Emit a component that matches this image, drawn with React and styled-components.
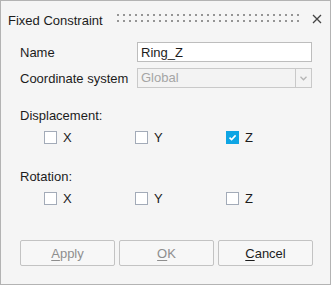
import React, { useState } from "react";
import styled, { createGlobalStyle } from "styled-components";

const GlobalStyle = createGlobalStyle`
    body {
        margin: 0;
        background: #f5f5f5;
        font-family: "Liberation Sans", Arial, sans-serif;
    }
`

const axes = ["X", "Y", "Z"];

const Grip = () => (
    <svg width="183" height="8" viewBox="0 0 183 8">
        <defs>
            <pattern id="grip" width="6" height="6" patternUnits="userSpaceOnUse">
                <rect x="0" y="0" width="2" height="2" fill="#959595" />
            </pattern>
        </defs>
        <rect x="0" y="0" width="183" height="8" fill="url(#grip)" />
    </svg>
)

const CloseIcon = () => (
    <svg width="10" height="10" viewBox="0 0 10 10">
        <path d="M1 1 L9 9 M9 1 L1 9" stroke="#444" strokeWidth="1.3" fill="none" />
    </svg>
)

const CheckItem = ({ label, checked, onToggle }) => (
    <StCheckLabel onClick={onToggle}>
        <StBox $checked={checked}>
            {checked && (
                <svg width="9" height="9" viewBox="0 0 9 9">
                    <path d="M1.5 4.6 L3.6 6.6 L7.6 2.4" stroke="#fff" strokeWidth="1.6" fill="none" />
                </svg>
            )}
        </StBox>
        {label}
    </StCheckLabel>
)

const App = () => {
    const [name, setName] = useState("Ring_Z");
    const [disp, setDisp] = useState({ X: false, Y: false, Z: true });
    const [rot, setRot] = useState({ X: false, Y: false, Z: false });

    return (
        <>
            <GlobalStyle />
            <StWindow>
                <StTitleBar>
                    <StTitle>Fixed Constraint</StTitle>
                    <StGripWrap>
                        <Grip />
                    </StGripWrap>
                    <StClose>
                        <CloseIcon />
                    </StClose>
                </StTitleBar>
                <StBody>
                    <StFields>
                        <StLabel>Name</StLabel>
                        <StInput value={name} onChange={(e) => setName(e.target.value)} />
                        <StLabel>Coordinate system</StLabel>
                        <StSelect>
                            <StSelectValue>Global</StSelectValue>
                            <StSelectButton>
                                <svg width="7" height="5" viewBox="0 0 7 5">
                                    <path d="M0.5 0.8 L3.5 3.8 L6.5 0.8" stroke="#b5b5b5" strokeWidth="1.3" fill="none" />
                                </svg>
                            </StSelectButton>
                        </StSelect>
                    </StFields>

                    <StSection $top={20}>Displacement:</StSection>
                    <StCheckRow>
                        {axes.map((a) => (
                            <CheckItem key={a} label={a} checked={disp[a]}
                                onToggle={() => setDisp({ ...disp, [a]: !disp[a] })} />
                        ))}
                    </StCheckRow>

                    <StSection $top={25}>Rotation:</StSection>
                    <StCheckRow>
                        {axes.map((a) => (
                            <CheckItem key={a} label={a} checked={rot[a]}
                                onToggle={() => setRot({ ...rot, [a]: !rot[a] })} />
                        ))}
                    </StCheckRow>

                    <StButtons>
                        <StButton disabled><u>A</u>pply</StButton>
                        <StButton disabled><u>O</u>K</StButton>
                        <StButton><u>C</u>ancel</StButton>
                    </StButtons>
                </StBody>
            </StWindow>
        </>
    )
}

export default App;

const StWindow = styled.div`
    width: 331px;
    height: 285px;
    box-sizing: border-box;
    border: 1px solid #b3b3b3;
    background: #f5f5f5;
    display: flex;
    flex-direction: column;
    color: #1c1c1c;
    font-size: 13px;
    line-height: 15px;
`
const StTitleBar = styled.div`
    height: 41px;
    flex-shrink: 0;
    display: flex;
    align-items: flex-start;
    padding: 12px 0 0 7px;
    box-sizing: border-box;
`
const StTitle = styled.div`
    width: 109px;
    white-space: nowrap;
`
const StGripWrap = styled.div`
    padding-top: 1px;
    height: 8px;
    display: flex;
`
const StClose = styled.div`
    margin-left: 12px;
    padding-top: 1px;
    display: flex;
`
const StBody = styled.div`
    flex: 1;
    display: flex;
    flex-direction: column;
    padding: 0 18px 18px 19px;
`
const StFields = styled.div`
    display: grid;
    grid-template-columns: 117px 1fr;
    grid-auto-rows: 20px;
    row-gap: 6px;
    align-items: center;
`
const StLabel = styled.div`
    white-space: nowrap;
`
const StInput = styled.input`
    box-sizing: border-box;
    height: 20px;
    width: 100%;
    margin: 0;
    border: 1px solid #bdbdbd;
    background: #fff;
    padding: 0 3px;
    font: inherit;
    color: #1c1c1c;
    outline: none;
`
const StSelect = styled.div`
    display: flex;
    height: 20px;
`
const StSelectValue = styled.div`
    flex: 1;
    box-sizing: border-box;
    border: 1px solid #c9c9c9;
    background: #f3f3f3;
    color: #a5a5a5;
    padding: 1px 3px 0;
`
const StSelectButton = styled.div`
    width: 16px;
    box-sizing: border-box;
    border: 1px solid #c9c9c9;
    border-left: none;
    background: #f3f3f3;
    display: flex;
    align-items: center;
    justify-content: center;
    padding-top: 1px;
`
const StSection = styled.div`
    margin-top: ${(p) => p.$top}px;
`
const StCheckRow = styled.div`
    display: grid;
    grid-template-columns: repeat(3, 91px);
    margin: 8px 0 0 24px;
    height: 13px;
`
const StCheckLabel = styled.div`
    display: flex;
    align-items: center;
    gap: 6px;
    height: 13px;
    cursor: default;
`
const StBox = styled.span`
    width: 13px;
    height: 13px;
    box-sizing: border-box;
    border: 1px solid ${(p) => (p.$checked ? "#0ea5e4" : "#a3abb8")};
    background: ${(p) => (p.$checked ? "#0ea5e4" : "#fff")};
    display: flex;
    align-items: center;
    justify-content: center;
`
const StButtons = styled.div`
    margin-top: auto;
    display: grid;
    grid-template-columns: repeat(3, 95px);
    gap: 4px;
`
const StButton = styled.button`
    height: 26px;
    margin: 0;
    border: 1px solid #c3c3c3;
    border-radius: 2px;
    background: #f7f7f7;
    font: inherit;
    color: #1c1c1c;
    padding: 0;
    &:disabled {
        color: #8e8e8e;
    }
    u {
        text-underline-offset: 2px;
    }
`
